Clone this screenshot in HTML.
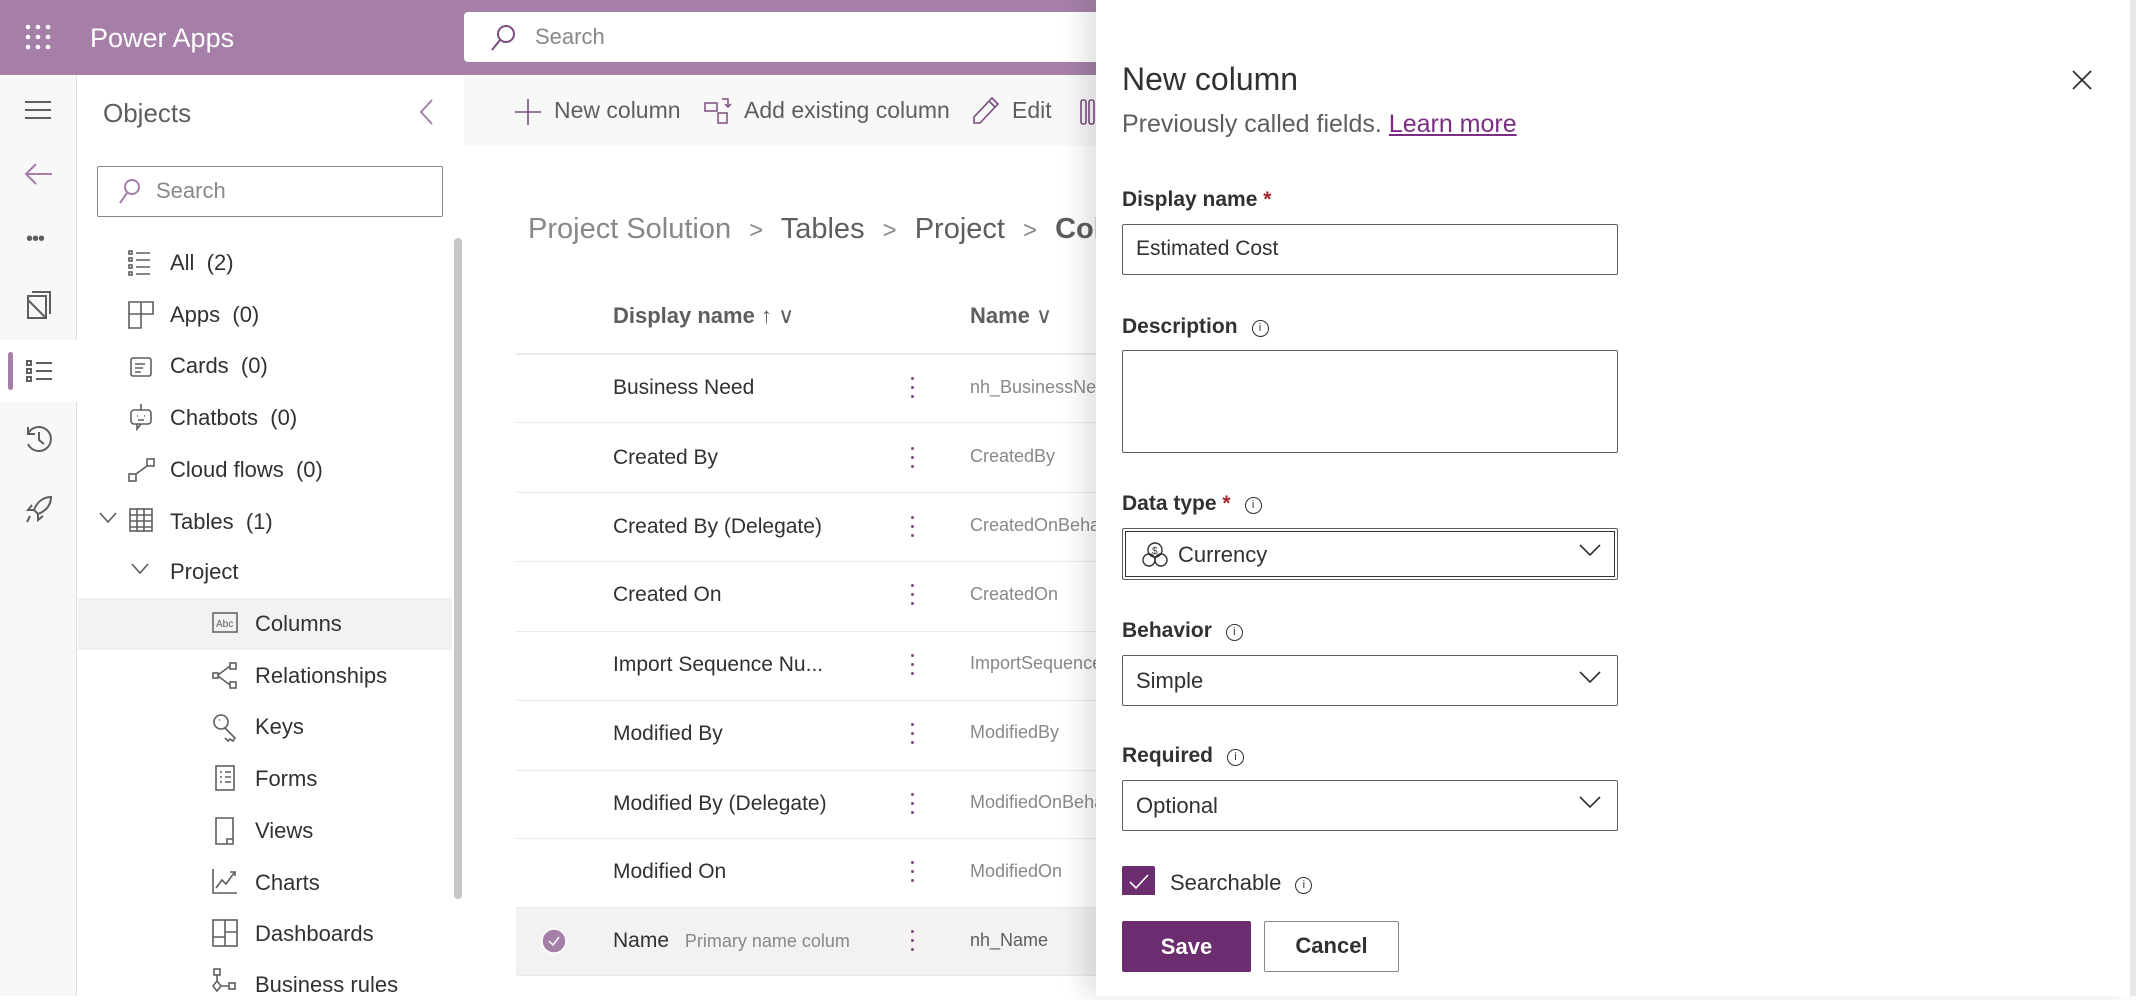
<!DOCTYPE html>
<html><head><meta charset="utf-8"><style>
*{box-sizing:border-box;margin:0;padding:0}
body{width:2136px;height:996px;overflow:hidden;position:relative;background:#fff;font-family:"Liberation Sans",sans-serif;color:#323130}
.a{position:absolute;white-space:nowrap}
.hdr{left:0;top:0;width:2136px;height:75px;background:#a57fa8}
.nav{font-size:22px;color:#323130;line-height:30px}
.row{position:absolute;left:516px;width:600px;height:1px;background:#edebe9}
.rt{position:absolute;left:613px;font-size:21px;color:#323130;line-height:28px}
.rn{position:absolute;left:970px;font-size:18px;color:#8a8886;line-height:28px}
.kb{position:absolute;left:911px;width:4px}
.kb i{display:block;width:3px;height:3px;border-radius:50%;background:#7a4d7e;margin-bottom:6px}
.lbl{position:absolute;left:1122px;font-size:21px;font-weight:bold;color:#323130;line-height:28px}
.box{position:absolute;left:1122px;width:496px;border:1.5px solid #605e5c;border-radius:2px;background:#fff}
.inf{display:inline-block;width:17px;height:17px;border:1.5px solid #323130;border-radius:50%;font-size:11px;text-align:center;line-height:14px;font-weight:normal;vertical-align:2px;margin-left:14px}
.chev{position:absolute;right:16px;top:15px}
</style></head><body>
<div class="a hdr"></div>
<!-- waffle -->
<svg class="a" style="left:25px;top:24px" width="26" height="26"><g fill="#fff"><circle cx="3" cy="3" r="2.3"/><circle cx="13" cy="3" r="2.3"/><circle cx="23" cy="3" r="2.3"/><circle cx="3" cy="13" r="2.3"/><circle cx="13" cy="13" r="2.3"/><circle cx="23" cy="13" r="2.3"/><circle cx="3" cy="23" r="2.3"/><circle cx="13" cy="23" r="2.3"/><circle cx="23" cy="23" r="2.3"/></g></svg>
<div class="a" style="left:90px;top:21px;font-size:27px;color:#fff;line-height:34px">Power Apps</div>
<div class="a" style="left:464px;top:12px;width:640px;height:50px;background:#fff;border-radius:4px"></div>
<svg class="a" style="left:490px;top:24px" width="26" height="28"><circle cx="16" cy="10" r="8" fill="none" stroke="#7a4d7e" stroke-width="2"/><line x1="10" y1="16" x2="2" y2="26" stroke="#7a4d7e" stroke-width="2"/></svg>
<div class="a" style="left:535px;top:24px;font-size:22px;color:#8a8886">Search</div>

<!-- left rail -->
<div class="a" style="left:0;top:75px;width:77px;height:921px;background:#f8f8f8;border-right:1px solid #e1dfdd"></div>
<div class="a" style="left:0;top:340px;width:77px;height:62px;background:#fff"></div>
<div class="a" style="left:8px;top:352px;width:5px;height:38px;background:#a57fa8;border-radius:3px"></div>
<svg class="a" style="left:25px;top:100px" width="28" height="20"><g stroke="#605e5c" stroke-width="2"><line x1="0" y1="2" x2="26" y2="2"/><line x1="0" y1="10" x2="26" y2="10"/><line x1="0" y1="18" x2="26" y2="18"/></g></svg>
<svg class="a" style="left:24px;top:162px" width="30" height="24" fill="none" stroke="#a57fa8" stroke-width="2"><path d="M28 12H2M12 2L2 12l10 10"/></svg>
<div class="a" style="left:26px;top:228px;font-size:20px;color:#605e5c;letter-spacing:-1px">•••</div>
<svg class="a" style="left:26px;top:290px" width="26" height="30" fill="none" stroke="#605e5c" stroke-width="2"><path d="M2 6h18v22H2zM6 2h18v22M2 10l18 18"/></svg>
<svg class="a" style="left:26px;top:360px" width="28" height="22" fill="none" stroke="#605e5c" stroke-width="2"><rect x="1" y="1" width="4" height="4"/><rect x="1" y="9" width="4" height="4"/><rect x="1" y="17" width="4" height="4"/><path d="M10 3h16M10 11h16M10 19h16"/></svg>
<svg class="a" style="left:24px;top:424px" width="30" height="30" fill="none" stroke="#605e5c" stroke-width="2"><path d="M4 10A12 12 0 1 1 4 20M4 3v7h7M15 8v8l5 4"/></svg>
<svg class="a" style="left:24px;top:494px" width="30" height="30" fill="none" stroke="#605e5c" stroke-width="2"><path d="M27 3c-8 0-14 5-17 13l4 4c8-3 13-9 13-17zM10 16l-6 0 4-5M14 20v6l5-4M6 22l-3 6"/></svg>

<!-- objects panel -->
<div class="a" style="left:78px;top:75px;width:386px;height:921px;background:#fff"></div>
<div class="a" style="left:103px;top:96px;font-size:26px;color:#605e5c;line-height:34px">Objects</div>
<svg class="a" style="left:418px;top:98px" width="16" height="28" fill="none" stroke="#a57fa8" stroke-width="2"><path d="M14 2L3 14l11 12"/></svg>
<div class="a" style="left:97px;top:166px;width:346px;height:51px;border:1.5px solid #8a8886;border-radius:2px"></div>
<svg class="a" style="left:117px;top:178px" width="24" height="28"><circle cx="15" cy="9" r="7" fill="none" stroke="#a57fa8" stroke-width="2"/><line x1="10" y1="15" x2="3" y2="25" stroke="#a57fa8" stroke-width="2"/></svg>
<div class="a" style="left:156px;top:178px;font-size:22px;color:#8a8886">Search</div>
<div class="a" style="left:454px;top:238px;width:8px;height:661px;background:#c8c6c4;border-radius:4px"></div>
<div class="a" style="left:78px;top:598px;width:374px;height:52px;background:#f3f2f1"></div>

<div class="a nav" style="left:170px;top:248px">All&nbsp; (2)</div>
<div class="a nav" style="left:170px;top:300px">Apps&nbsp; (0)</div>
<div class="a nav" style="left:170px;top:351px">Cards&nbsp; (0)</div>
<div class="a nav" style="left:170px;top:403px">Chatbots&nbsp; (0)</div>
<div class="a nav" style="left:170px;top:455px">Cloud flows&nbsp; (0)</div>
<div class="a nav" style="left:170px;top:507px">Tables&nbsp; (1)</div>
<div class="a nav" style="left:170px;top:557px">Project</div>
<div class="a nav" style="left:255px;top:609px">Columns</div>
<div class="a nav" style="left:255px;top:661px">Relationships</div>
<div class="a nav" style="left:255px;top:712px">Keys</div>
<div class="a nav" style="left:255px;top:764px">Forms</div>
<div class="a nav" style="left:255px;top:816px">Views</div>
<div class="a nav" style="left:255px;top:868px">Charts</div>
<div class="a nav" style="left:255px;top:919px">Dashboards</div>
<div class="a nav" style="left:255px;top:970px">Business rules</div>
<!-- nav icons -->
<svg class="a" style="left:128px;top:250px" width="26" height="26" fill="none" stroke="#605e5c" stroke-width="1.6"><rect x="1" y="1" width="3" height="3"/><rect x="1" y="8" width="3" height="3"/><rect x="1" y="15" width="3" height="3"/><rect x="1" y="22" width="3" height="3"/><path d="M8 3h14M8 10h14M8 17h14M8 24h14"/></svg>
<svg class="a" style="left:128px;top:301px" width="26" height="28" fill="none" stroke="#605e5c" stroke-width="1.6"><path d="M1 1h24v12H1zM1 1v26h12V1"/></svg>
<svg class="a" style="left:130px;top:356px" width="22" height="22" fill="none" stroke="#605e5c" stroke-width="1.6"><rect x="1" y="2" width="20" height="18" rx="2"/><path d="M5 8h10M5 12h8M5 16h6"/></svg>
<svg class="a" style="left:129px;top:403px" width="24" height="28" fill="none" stroke="#605e5c" stroke-width="1.6"><rect x="2" y="7" width="20" height="14" rx="3"/><path d="M12 1v6M8 13h1M15 13h1M9 17h6M8 21v5l4-5"/></svg>
<svg class="a" style="left:128px;top:457px" width="28" height="26" fill="none" stroke="#605e5c" stroke-width="1.6"><rect x="1" y="17" width="7" height="7"/><rect x="19" y="2" width="7" height="7"/><path d="M8 17L19 9"/></svg>
<svg class="a" style="left:99px;top:512px" width="18" height="12" fill="none" stroke="#605e5c" stroke-width="1.6"><path d="M1 1l8 9 8-9"/></svg>
<svg class="a" style="left:129px;top:508px" width="24" height="24" fill="none" stroke="#605e5c" stroke-width="1.6"><rect x="1" y="1" width="22" height="22"/><path d="M1 7h22M1 13h22M1 19h22M8 1v22M15 1v22"/></svg>
<svg class="a" style="left:131px;top:563px" width="18" height="12" fill="none" stroke="#605e5c" stroke-width="1.6"><path d="M1 1l8 9 8-9"/></svg>
<svg class="a" style="left:212px;top:612px" width="26" height="22"><rect x="1" y="1" width="24" height="19" fill="none" stroke="#605e5c" stroke-width="1.5"/><text x="4" y="15" font-size="10" fill="#605e5c" font-family="Liberation Sans">Abc</text></svg>
<svg class="a" style="left:212px;top:662px" width="26" height="28" fill="none" stroke="#605e5c" stroke-width="1.6"><rect x="1" y="11" width="5" height="5"/><rect x="18" y="1" width="6" height="6"/><rect x="18" y="20" width="6" height="6"/><path d="M6 13L18 4M6 14l12 9"/></svg>
<svg class="a" style="left:212px;top:713px" width="26" height="30" fill="none" stroke="#605e5c" stroke-width="1.6"><circle cx="9" cy="9" r="7"/><path d="M13 15l10 10-2 3-3-2-2 2-3-3M7 7h1"/></svg>
<svg class="a" style="left:215px;top:765px" width="20" height="26" fill="none" stroke="#605e5c" stroke-width="1.6"><rect x="1" y="1" width="18" height="24"/><path d="M5 7h2M10 7h6M5 12h2M10 12h6M5 17h2M10 17h6"/></svg>
<svg class="a" style="left:215px;top:817px" width="20" height="28" fill="none" stroke="#605e5c" stroke-width="1.6"><path d="M1 1h17v26H1zM12 27v-5h6"/></svg>
<svg class="a" style="left:212px;top:868px" width="26" height="26" fill="none" stroke="#605e5c" stroke-width="1.6"><path d="M1 1v24h24M4 20l6-8 4 4 8-11M18 4h5v4"/></svg>
<svg class="a" style="left:212px;top:919px" width="26" height="28" fill="none" stroke="#605e5c" stroke-width="1.6"><rect x="1" y="1" width="24" height="26"/><path d="M13 1v26M13 13h12M1 18h12"/></svg>
<svg class="a" style="left:212px;top:968px" width="26" height="28" fill="none" stroke="#605e5c" stroke-width="1.6"><rect x="2" y="1" width="6" height="6"/><path d="M5 7v6l-4 5 4 5 4-5-4-5M9 18h8"/><rect x="17" y="15" width="6" height="6"/></svg>

<!-- main -->
<div class="a" style="left:464px;top:75px;width:640px;height:71px;background:#f8f8f8"></div>
<svg class="a" style="left:515px;top:98px" width="26" height="28" stroke="#7a4d7e" stroke-width="1.6"><path d="M13 1v26M0 14h26"/></svg>
<div class="a" style="left:554px;top:97px;font-size:23px;color:#605e5c">New column</div>
<svg class="a" style="left:704px;top:98px" width="28" height="26" fill="none" stroke="#7a4d7e" stroke-width="1.5"><rect x="1" y="5" width="12" height="8"/><rect x="14" y="15" width="9" height="10"/><path d="M18 1h6v8M21 6l3 3 3-3"/></svg>
<div class="a" style="left:744px;top:97px;font-size:23px;color:#605e5c">Add existing column</div>
<svg class="a" style="left:972px;top:96px" width="28" height="30" fill="none" stroke="#7a4d7e" stroke-width="1.6"><path d="M20 2l6 6L8 27H2v-6zM17 5l6 6"/></svg>
<div class="a" style="left:1012px;top:97px;font-size:23px;color:#605e5c">Edit</div>
<svg class="a" style="left:1080px;top:98px" width="16" height="28" fill="none" stroke="#7a4d7e" stroke-width="1.6"><rect x="1" y="2" width="5" height="24" rx="2"/><rect x="9" y="2" width="5" height="24" rx="2"/></svg>

<div class="a" style="left:528px;top:211px;font-size:29px;color:#8a8886;line-height:36px">Project Solution <span style="margin:0 10px;font-size:24px">&gt;</span> <span style="color:#605e5c">Tables</span> <span style="margin:0 10px;font-size:24px">&gt;</span> <span style="color:#605e5c">Project</span> <span style="margin:0 10px;font-size:24px">&gt;</span> <b style="color:#605e5c">Columns</b></div>

<div class="a" style="left:613px;top:303px;font-size:22px;font-weight:bold;color:#605e5c">Display name <span style="font-weight:normal">↑ ∨</span></div>
<div class="a" style="left:970px;top:303px;font-size:22px;font-weight:bold;color:#605e5c">Name <span style="font-weight:normal">∨</span></div>
<div class="row" style="top:353px;height:2px"></div>
<div class="a" style="left:516px;top:907px;width:600px;height:68px;background:#f3f2f1"></div>
<div class="row" style="top:422px"></div><div class="row" style="top:492px"></div><div class="row" style="top:561px"></div><div class="row" style="top:631px"></div><div class="row" style="top:700px"></div><div class="row" style="top:770px"></div><div class="row" style="top:838px"></div><div class="row" style="top:907px"></div><div class="row" style="top:975px"></div>

<div class="rt" style="top:374px">Business Need</div><div class="rn" style="top:373px">nh_BusinessNeed</div>
<div class="rt" style="top:444px">Created By</div><div class="rn" style="top:442px">CreatedBy</div>
<div class="rt" style="top:513px">Created By (Delegate)</div><div class="rn" style="top:511px">CreatedOnBehalfBy</div>
<div class="rt" style="top:581px">Created On</div><div class="rn" style="top:580px">CreatedOn</div>
<div class="rt" style="top:651px">Import Sequence Nu...</div><div class="rn" style="top:649px">ImportSequenceNumber</div>
<div class="rt" style="top:720px">Modified By</div><div class="rn" style="top:718px">ModifiedBy</div>
<div class="rt" style="top:790px">Modified By (Delegate)</div><div class="rn" style="top:788px">ModifiedOnBehalfBy</div>
<div class="rt" style="top:858px">Modified On</div><div class="rn" style="top:857px">ModifiedOn</div>
<div class="rt" style="top:927px">Name <span style="font-size:18px;color:#8a8886;margin-left:10px">Primary name colum</span></div><div class="rn" style="top:926px;color:#605e5c">nh_Name</div>
<div class="kb" style="top:377px"><i></i><i></i><i></i></div>
<div class="kb" style="top:447px"><i></i><i></i><i></i></div>
<div class="kb" style="top:516px"><i></i><i></i><i></i></div>
<div class="kb" style="top:584px"><i></i><i></i><i></i></div>
<div class="kb" style="top:654px"><i></i><i></i><i></i></div>
<div class="kb" style="top:723px"><i></i><i></i><i></i></div>
<div class="kb" style="top:793px"><i></i><i></i><i></i></div>
<div class="kb" style="top:861px"><i></i><i></i><i></i></div>
<div class="kb" style="top:930px"><i></i><i></i><i></i></div>
<svg class="a" style="left:541px;top:928px" width="26" height="26"><circle cx="13" cy="13" r="12" fill="#a57fa8" stroke="#fff" stroke-width="1.5"/><path d="M8 13l4 4 6-8" fill="none" stroke="#fff" stroke-width="1.5"/></svg>

<!-- panel -->
<div class="a" style="left:1096px;top:0;width:1036px;height:996px;background:#fff;box-shadow:-12px 0 24px rgba(0,0,0,0.12)"></div>
<div class="a" style="left:2130px;top:0;width:6px;height:996px;background:#e8e8e8"></div>
<div class="a" style="left:1122px;top:59px;font-size:32px;color:#323130;line-height:40px">New column</div>
<svg class="a" style="left:2072px;top:70px" width="20" height="20" stroke="#323130" stroke-width="1.8"><path d="M1 1l18 18M19 1L1 19"/></svg>
<div class="a" style="left:1122px;top:108px;font-size:25px;color:#605e5c;line-height:32px">Previously called fields. <span style="color:#7a2d82;text-decoration:underline">Learn more</span></div>

<div class="lbl" style="top:186px">Display name <span style="color:#a4262c">*</span></div>
<div class="box" style="top:224px;height:51px"><div class="a" style="left:13px;top:12px;font-size:21px">Estimated Cost</div></div>

<div class="lbl" style="top:313px">Description<span class="inf">i</span></div>
<div class="box" style="top:350px;height:103px"></div>

<div class="lbl" style="top:490px">Data type <span style="color:#a4262c">*</span><span class="inf">i</span></div>
<div class="box" style="top:528px;height:52px;border:1.5px solid #605e5c;padding:2px"><div style="border:1.5px solid #323130;height:100%"></div>
<svg class="a" style="left:18px;top:12px" width="28" height="28" fill="none" stroke="#323130" stroke-width="1.4"><circle cx="14" cy="9" r="7"/><circle cx="8" cy="19" r="6"/><circle cx="20" cy="19" r="6"/><text x="11" y="13" font-size="10" fill="#323130" stroke="none">$</text></svg>
<div class="a" style="left:55px;top:13px;font-size:22px">Currency</div>
<svg class="chev" width="22" height="12" fill="none" stroke="#323130" stroke-width="1.6"><path d="M1 1l10 10 10-10"/></svg></div>

<div class="lbl" style="top:617px">Behavior<span class="inf">i</span></div>
<div class="box" style="top:655px;height:51px"><div class="a" style="left:13px;top:12px;font-size:22px">Simple</div><svg class="chev" width="22" height="12" fill="none" stroke="#323130" stroke-width="1.6"><path d="M1 1l10 10 10-10"/></svg></div>

<div class="lbl" style="top:742px">Required<span class="inf">i</span></div>
<div class="box" style="top:780px;height:51px"><div class="a" style="left:13px;top:12px;font-size:22px">Optional</div><svg class="chev" width="22" height="12" fill="none" stroke="#323130" stroke-width="1.6"><path d="M1 1l10 10 10-10"/></svg></div>

<div class="a" style="left:1122px;top:866px;width:33px;height:29px;background:#6b2d6f;border-radius:2px 2px 0 0"></div>
<svg class="a" style="left:1129px;top:874px" width="20" height="16" fill="none" stroke="#fff" stroke-width="1.6"><path d="M1 8l6 6L19 1"/></svg>
<div class="a" style="left:1170px;top:868px;font-size:22px;color:#323130;line-height:30px">Searchable<span class="inf" style="font-weight:normal">i</span></div>

<div class="a" style="left:1122px;top:921px;width:129px;height:51px;background:#6b2d6f;border-radius:2px;color:#fff;font-size:22px;font-weight:bold;text-align:center;line-height:51px">Save</div>
<div class="a" style="left:1264px;top:921px;width:135px;height:51px;border:1.5px solid #8a8886;border-radius:2px;color:#323130;font-size:22px;font-weight:bold;text-align:center;line-height:48px">Cancel</div>
</body></html>
